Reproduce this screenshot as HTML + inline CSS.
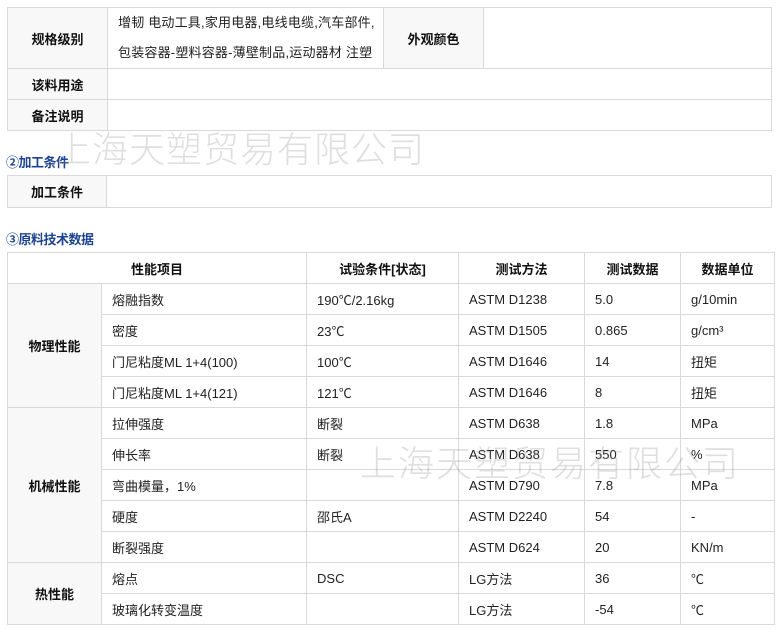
<!DOCTYPE html>
<html><head><meta charset="utf-8"><style>
*{margin:0;padding:0;box-sizing:border-box}
body{width:780px;height:629px;background:#fff;position:relative;overflow:hidden;font-family:"Liberation Sans","Noto Sans CJK SC",sans-serif;font-size:13px;color:#222}
table{position:absolute;border-collapse:collapse;table-layout:fixed}
td{border:1px solid #d9d9d9;padding:0 0 0 10px;vertical-align:middle}
.h{background:#f8f8f8;font-weight:bold;text-align:center;padding:0;color:#111}
.sec{position:absolute;left:6px;color:#1d4592;font-size:13px;font-weight:bold;letter-spacing:-0.5px}
.wm{position:absolute;color:rgba(150,150,150,0.3);font-size:36px;letter-spacing:1px;white-space:nowrap;font-family:"Noto Sans CJK SC",sans-serif;font-weight:300}
</style></head><body>
<table style="left:7px;top:7px;width:765px">
<colgroup><col style="width:100px"><col style="width:276px"><col style="width:100px"><col></colgroup>
<tr style="height:60px"><td class="h">规格级别</td><td style="line-height:30px;padding-left:10px;white-space:nowrap;letter-spacing:0.2px">增韧 电动工具,家用电器,电线电缆,汽车部件,<br>包装容器-塑料容器-薄壁制品,运动器材 注塑</td><td class="h">外观颜色</td><td></td></tr>
<tr style="height:31px"><td class="h">该料用途</td><td colspan="3"></td></tr>
<tr style="height:31px"><td class="h">备注说明</td><td colspan="3"></td></tr>
</table>
<div class="sec" style="top:152px">②加工条件</div>
<table style="left:7px;top:175px;width:765px">
<colgroup><col style="width:99px"><col></colgroup>
<tr style="height:32px"><td class="h">加工条件</td><td></td></tr>
</table>
<div class="sec" style="top:229px">③原料技术数据</div>
<table style="left:7px;top:252px;width:768px">
<colgroup><col style="width:94px"><col style="width:205px"><col style="width:152px"><col style="width:126px"><col style="width:96px"><col></colgroup>
<tr style="height:31px"><td class="h" colspan="2" style="background:#fff">性能项目</td><td class="h" style="background:#fff">试验条件[状态]</td><td class="h" style="background:#fff">测试方法</td><td class="h" style="background:#fff">测试数据</td><td class="h" style="background:#fff">数据单位</td></tr>
<tr style="height:31px"><td class="h" rowspan="4">物理性能</td><td>熔融指数</td><td>190℃/2.16kg</td><td>ASTM D1238</td><td>5.0</td><td>g/10min</td></tr>
<tr style="height:31px"><td>密度</td><td>23℃</td><td>ASTM D1505</td><td>0.865</td><td>g/cm³</td></tr>
<tr style="height:31px"><td>门尼粘度ML 1+4(100)</td><td>100℃</td><td>ASTM D1646</td><td>14</td><td>扭矩</td></tr>
<tr style="height:31px"><td>门尼粘度ML 1+4(121)</td><td>121℃</td><td>ASTM D1646</td><td>8</td><td>扭矩</td></tr>
<tr style="height:31px"><td class="h" rowspan="5">机械性能</td><td>拉伸强度</td><td>断裂</td><td>ASTM D638</td><td>1.8</td><td>MPa</td></tr>
<tr style="height:31px"><td>伸长率</td><td>断裂</td><td>ASTM D638</td><td>550</td><td>%</td></tr>
<tr style="height:31px"><td>弯曲模量，1%</td><td></td><td>ASTM D790</td><td>7.8</td><td>MPa</td></tr>
<tr style="height:31px"><td>硬度</td><td>邵氏A</td><td>ASTM D2240</td><td>54</td><td>-</td></tr>
<tr style="height:31px"><td>断裂强度</td><td></td><td>ASTM D624</td><td>20</td><td>KN/m</td></tr>
<tr style="height:31px"><td class="h" rowspan="2">热性能</td><td>熔点</td><td>DSC</td><td>LG方法</td><td>36</td><td>℃</td></tr>
<tr style="height:31px"><td>玻璃化转变温度</td><td></td><td>LG方法</td><td>-54</td><td>℃</td></tr>
</table>
<div class="wm" style="left:55px;top:121px">上海天塑贸易有限公司</div>
<div class="wm" style="left:360px;top:435px;letter-spacing:2px">上海天塑贸易有限公司</div>
</body></html>
